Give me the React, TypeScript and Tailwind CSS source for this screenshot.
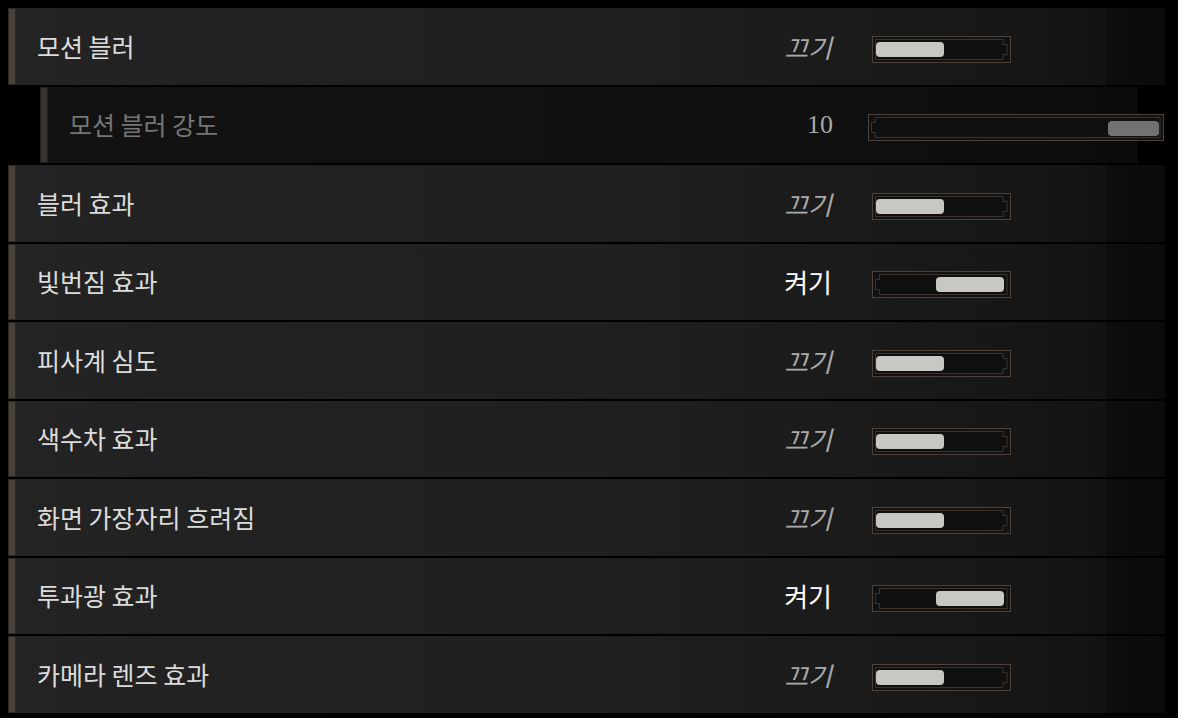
import React from "react";

type Row = { label: string; on?: boolean; sub?: boolean; value?: number };

const rows: Row[] = [
  { label: "모션 블러", on: false },
  { label: "모션 블러 강도", sub: true, value: 10 },
  { label: "블러 효과", on: false },
  { label: "빛번짐 효과", on: true },
  { label: "피사계 심도", on: false },
  { label: "색수차 효과", on: false },
  { label: "화면 가장자리 흐려짐", on: false },
  { label: "투과광 효과", on: true },
  { label: "카메라 렌즈 효과", on: false },
];

const font = { fontFamily: '"Noto Sans CJK KR", "Noto Sans", sans-serif' };

function Frame({ w, notchRight }: { w: number; notchRight: boolean }) {
  const h = 27;
  const r = w - 4;
  // inner line with a small notch on the empty end
  const d = notchRight
    ? `M3.5 3.5 H${r - 4} V8.5 H${r} V${h - 8.5} H${r - 4} V${h - 3.5} H3.5 Z`
    : `M${r} 3.5 H7.5 V8.5 H3.5 V${h - 8.5} H7.5 V${h - 3.5} H${r} Z`;
  return (
    <svg width={w} height={h} className="absolute left-0 top-0">
      <rect x={0.5} y={0.5} width={w - 1} height={h - 1} fill="#121212" stroke="#4c423a" />
      <path d={d} fill="#0f0f0f" stroke="#3b332c" />
    </svg>
  );
}

function Toggle({ on }: { on: boolean }) {
  return (
    <div className="relative ml-[40px] mt-[6px] h-[27px] w-[139px] shrink-0">
      <Frame w={139} notchRight={!on} />
      <div
        className={
          on
            ? "absolute left-[64px] top-[6px] h-[15px] w-[68px] rounded-[4px] bg-[#c9c7c3]"
            : "absolute left-[4px] top-[6px] h-[15px] w-[68px] rounded-[4px] bg-[#c9c7c3]"
        }
      />
    </div>
  );
}

function Slider() {
  return (
    <div className="relative ml-[35px] mt-[6px] h-[28px] w-[296px] shrink-0">
      <Frame w={296} notchRight={false} />
      <div className="absolute left-[240px] top-[7px] h-[15px] w-[51px] rounded-[4px] bg-[#727272]" />
    </div>
  );
}

function MainRow({ row }: { row: Row }) {
  return (
    <div className="ml-2 flex h-[76.5px] w-[1157px] shrink-0 items-center bg-[linear-gradient(to_right,#232323_0%,#1f1f1f_55%,#171717_85%,#131313_94.9%,#0d0d0d_94.9%,#0b0b0b_100%)]">
      <div className="h-full w-2 shrink-0 border border-[#2e2924] bg-[#4a4139]" />
      <div className="w-[744px] shrink-0 pl-[21px] text-[25px] text-[#dcdcdc]" style={font}>
        {row.label}
      </div>
      <div
        className={
          row.on
            ? "w-[72px] shrink-0 text-right text-[26px] text-white"
            : "w-[72px] shrink-0 text-right text-[26px] italic text-[#a9a9a9]"
        }
        style={font}
      >
        {row.on ? "켜기" : "끄기"}
      </div>
      <Toggle on={!!row.on} />
    </div>
  );
}

function SubRow({ row }: { row: Row }) {
  return (
    <div className="ml-10 flex h-[76.5px] w-[1098px] shrink-0 items-center bg-[linear-gradient(to_right,#121212_0%,#101010_70%,#0c0c0c_97.5%,#0b0b0b_100%)]">
      <div className="h-full w-2 shrink-0 border border-[#231f1b] bg-[#3a332d]" />
      <div className="w-[712px] shrink-0 pl-[21px] text-[25px] text-[#757575]" style={font}>
        {row.label}
      </div>
      <div
        className="w-[73px] shrink-0 text-right text-[26px] text-[#a8a8a8]"
        style={{ fontFamily: '"Liberation Serif", serif' }}
      >
        {row.value}
      </div>
      <Slider />
    </div>
  );
}

export default function App() {
  return (
    <div className="flex h-[718px] w-[1178px] flex-col gap-[2px] overflow-hidden bg-black pt-2">
      {rows.map((r, i) =>
        r.sub ? <SubRow key={i} row={r} /> : <MainRow key={i} row={r} />
      )}
    </div>
  );
}
